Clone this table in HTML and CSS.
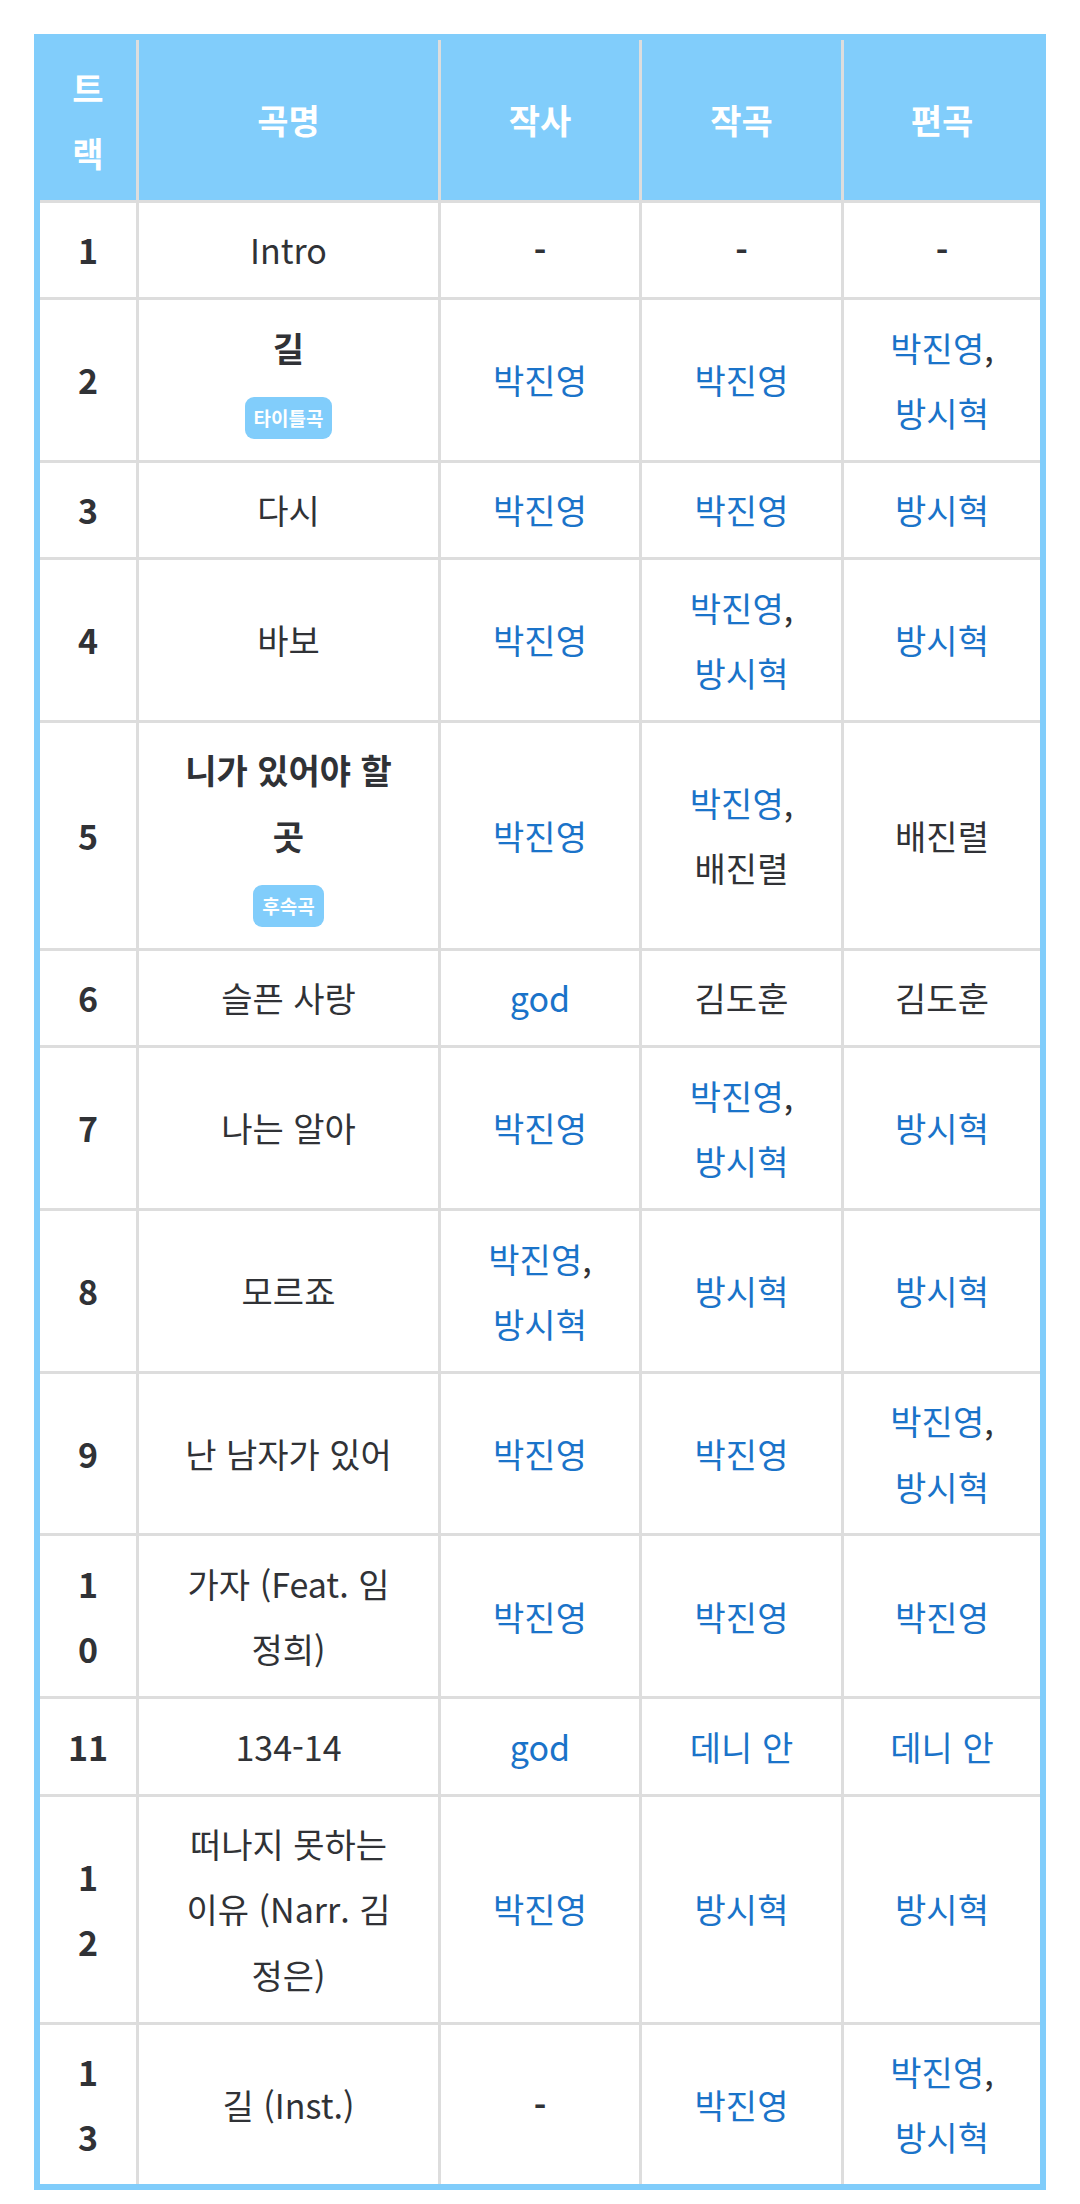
FILE: index.html
```html
<!DOCTYPE html>
<html lang="ko">
<head>
<meta charset="utf-8">
<title>god 3집 트랙 리스트</title>
<link rel="stylesheet" href="styles.css">
</head>
<body>
<div class="wrap">
<table class="tracks">
  <colgroup>
    <col class="c-no"><col class="c-title"><col class="c-lyric"><col class="c-comp"><col class="c-arr">
  </colgroup>
  <thead>
    <tr><th>트<br>랙</th><th>곡명</th><th>작사</th><th>작곡</th><th>편곡</th></tr>
  </thead>
  <tbody>
    <tr><td class="no">1</td><td>Intro</td><td class="dash">-</td><td class="dash">-</td><td class="dash">-</td></tr>
    <tr><td class="no">2</td><td><div class="hit">길</div><div class="badge-line"><span class="badge">타이틀곡</span></div></td><td><a>박진영</a></td><td><a>박진영</a></td><td><a>박진영</a>,<br><a>방시혁</a></td></tr>
    <tr><td class="no">3</td><td>다시</td><td><a>박진영</a></td><td><a>박진영</a></td><td><a>방시혁</a></td></tr>
    <tr><td class="no">4</td><td>바보</td><td><a>박진영</a></td><td><a>박진영</a>,<br><a>방시혁</a></td><td><a>방시혁</a></td></tr>
    <tr><td class="no">5</td><td><div class="hit">니가 있어야 할<br>곳</div><div class="badge-line"><span class="badge">후속곡</span></div></td><td><a>박진영</a></td><td><a>박진영</a>,<br>배진렬</td><td>배진렬</td></tr>
    <tr><td class="no">6</td><td>슬픈 사랑</td><td><a>god</a></td><td>김도훈</td><td>김도훈</td></tr>
    <tr><td class="no">7</td><td>나는 알아</td><td><a>박진영</a></td><td><a>박진영</a>,<br><a>방시혁</a></td><td><a>방시혁</a></td></tr>
    <tr><td class="no">8</td><td>모르죠</td><td><a>박진영</a>,<br><a>방시혁</a></td><td><a>방시혁</a></td><td><a>방시혁</a></td></tr>
    <tr><td class="no">9</td><td>난 남자가 있어</td><td><a>박진영</a></td><td><a>박진영</a></td><td><a>박진영</a>,<br><a>방시혁</a></td></tr>
    <tr><td class="no">1<br>0</td><td>가자 (Feat. 임<br>정희)</td><td><a>박진영</a></td><td><a>박진영</a></td><td><a>박진영</a></td></tr>
    <tr><td class="no">11</td><td>134-14</td><td><a>god</a></td><td><a>데니 안</a></td><td><a>데니 안</a></td></tr>
    <tr><td class="no">1<br>2</td><td>떠나지 못하는<br>이유 (Narr. 김<br>정은)</td><td><a>박진영</a></td><td><a>방시혁</a></td><td><a>방시혁</a></td></tr>
    <tr><td class="no">1<br>3</td><td>길 (Inst.)</td><td class="dash">-</td><td><a>박진영</a></td><td><a>박진영</a>,<br><a>방시혁</a></td></tr>
  </tbody>
</table>
</div>
</body>
</html>
```
FILE: styles.css
```css
html, body {
  margin: 0;
  padding: 0;
  background: #ffffff;
}

body {
  font-family: "Noto Sans CJK KR", "Noto Sans", sans-serif;
  color: #303236;
}

.wrap {
  padding: 34px 34px 15px 34px;
}

.tracks {
  box-sizing: border-box;
  width: 1012px;
  table-layout: fixed;
  border-collapse: separate;
  border-spacing: 0;
  border: 6px solid #81cdfb;
  font-size: 34px;
  line-height: 65.36px;
}

.c-no { width: 99px; }
.c-title { width: 302px; }
.c-lyric { width: 201px; }
.c-comp { width: 202px; }
.c-arr { width: 196px; }

.tracks th,
.tracks td {
  box-sizing: border-box;
  padding: 14.5px 6px;
  text-align: center;
  vertical-align: middle;
  border-right: 3px solid #dddddd;
  border-bottom: 3px solid #dddddd;
}

.tracks th:last-child,
.tracks td:last-child {
  border-right: none;
}

.tracks tbody tr:last-child td {
  border-bottom: none;
}

.tracks th {
  background: #81cdfb;
  color: #ffffff;
  font-weight: 700;
}

.tracks td.no {
  font-weight: 700;
  color: #303236;
}

.tracks td.dash {
  font-weight: 700;
}

.tracks a {
  color: #1a73c9;
  text-decoration: none;
}

.hit {
  font-weight: 700;
}

.badge-line {
  box-sizing: border-box;
  height: 65.36px;
  padding-top: 10px;
  display: flex;
  justify-content: center;
  align-items: center;
}

.badge {
  display: inline-block;
  height: 42px;
  line-height: 42px;
  padding: 0 9px;
  border-radius: 9px;
  background: #81cdfb;
  color: #ffffff;
  font-size: 19px;
  font-weight: 700;
}
```
